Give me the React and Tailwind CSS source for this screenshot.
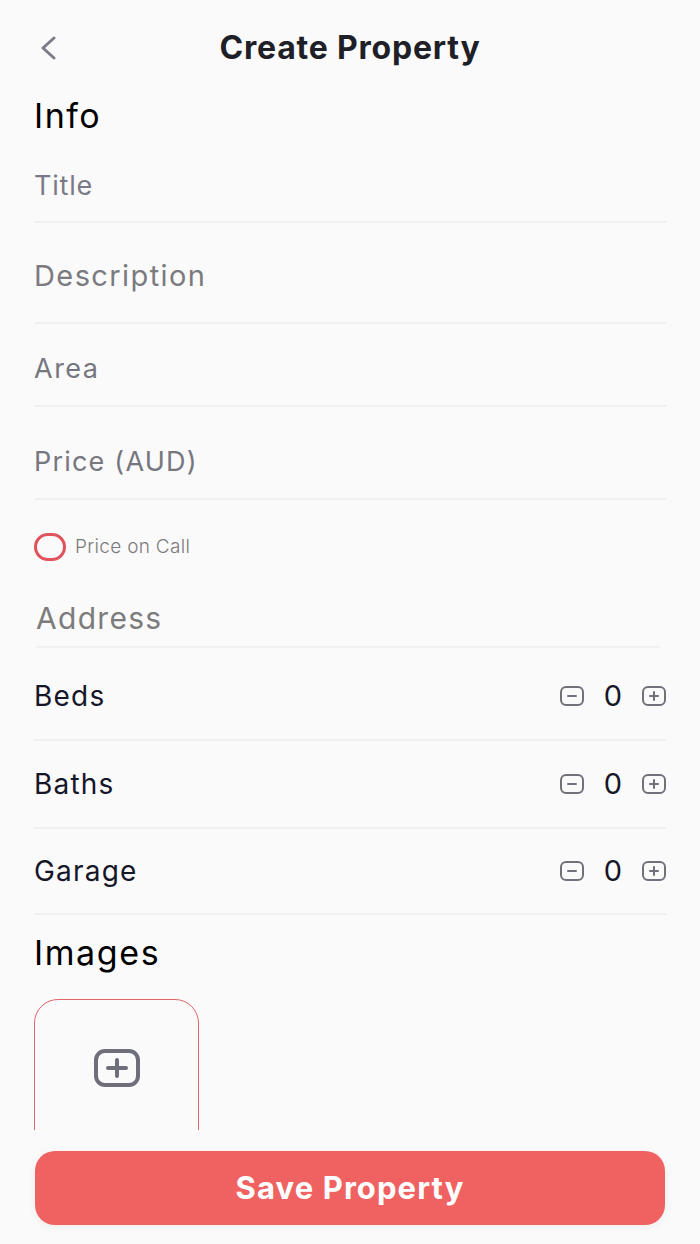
import React, { useState } from "react";

function Stepper({ value, onMinus, onPlus }) {
  return (
    <div className="flex items-center">
      <button onClick={onMinus} className="w-[24px] h-[20px] flex items-center justify-center">
        <svg width="24" height="20" viewBox="0 0 24 20" fill="none" stroke="#71717c" strokeWidth="2" strokeLinecap="round">
          <rect x="1" y="1" width="22" height="18" rx="5" />
          <path d="M8 10h8" />
        </svg>
      </button>
      <span className="w-[58px] text-center text-[29px] leading-[32px] text-[#161629]">{value}</span>
      <button onClick={onPlus} className="w-[24px] h-[20px] flex items-center justify-center">
        <svg width="24" height="20" viewBox="0 0 24 20" fill="none" stroke="#71717c" strokeWidth="2" strokeLinecap="round">
          <rect x="1" y="1" width="22" height="18" rx="5" />
          <path d="M8 10h8M12 6v8" />
        </svg>
      </button>
    </div>
  );
}

export default function App() {
  const [beds, setBeds] = useState(0);
  const [baths, setBaths] = useState(0);
  const [garage, setGarage] = useState(0);
  const [onCall, setOnCall] = useState(false);

  const counters = [
    { label: "Beds", value: beds, set: setBeds, cls: "pt-[32px] pb-[27px]" },
    { label: "Baths", value: baths, set: setBaths, cls: "pt-[27px] pb-[27px]" },
    { label: "Garage", value: garage, set: setGarage, cls: "pt-[26px] pb-[26px]" },
  ];

  return (
    <div className="h-[1244px] flex flex-col bg-[#fafafa] font-['Inter',sans-serif]">
      {/* header */}
      <div className="h-[96px] shrink-0 grid grid-cols-[1fr_auto_1fr] items-center px-[34px]">
        <button className="w-[30px] h-[30px] flex items-center">
          <svg width="24" height="24" viewBox="0 0 24 24" fill="none" stroke="#7b7b87" strokeWidth="3" strokeLinecap="round" strokeLinejoin="round">
            <path d="M20 2L9 12l11 10" />
          </svg>
        </button>
        <h1 className="text-[32px] font-bold text-[#1f1f28] tracking-[0.8px]">Create Property</h1>
        <div />
      </div>

      {/* scroll area */}
      <div className="flex-1 overflow-hidden px-[34px]">
        <h2 className="text-[34px] leading-[40px] text-black tracking-[1.5px]">Info</h2>

        <div className="pt-[34px] pb-[19px] border-b-2 border-[#f0f0f0]">
          <div className="text-[27px] leading-[32px] text-[#7a7a86] tracking-[0.8px]">Title</div>
        </div>
        <div className="pt-[37px] pb-[30px] border-b-2 border-[#f0f0f0]">
          <div className="text-[29px] leading-[32px] text-[#7a7a7f] tracking-[1.4px]">Description</div>
        </div>
        <div className="pt-[29px] pb-[20px] border-b-2 border-[#f0f0f0]">
          <div className="text-[27px] leading-[32px] text-[#76767f] tracking-[1.5px]">Area</div>
        </div>
        <div className="pt-[39px] pb-[20px] border-b-2 border-[#f0f0f0]">
          <div className="text-[27px] leading-[32px] text-[#76767f] tracking-[1.2px]">Price (AUD)</div>
        </div>

        <button onClick={() => setOnCall(!onCall)} className="mt-[33px] flex items-center gap-[9px]">
          <span className="w-[32px] h-[28px] rounded-full border-[3px] border-[#e0535b] flex items-center justify-center">
            {onCall && <span className="w-[14px] h-[12px] rounded-full bg-[#e0535b]" />}
          </span>
          <span className="text-[19px] font-light text-[#7a7a7a] tracking-[0.3px]">Price on Call</span>
        </button>

        <div className="ml-[2px] mr-[6px] pt-[40px] pb-[12px] border-b-2 border-[#f0f0f0]">
          <div className="text-[30px] leading-[32px] text-[#7c7c7c] tracking-[1.3px]">Address</div>
        </div>

        {counters.map((c) => (
          <div key={c.label} className={`${c.cls} flex items-center justify-between border-b-2 border-[#f0f0f0]`}>
            <span className="text-[28px] leading-[32px] text-[#161629] tracking-[1.2px]">{c.label}</span>
            <Stepper
              value={c.value}
              onMinus={() => c.set(Math.max(0, c.value - 1))}
              onPlus={() => c.set(c.value + 1)}
            />
          </div>
        ))}

        <h2 className="pt-[18px] text-[34px] leading-[40px] text-black tracking-[1.6px]">Images</h2>

        <button className="mt-[26px] w-[165px] h-[164px] rounded-[24px] border-[1.5px] border-[#e0646a] flex items-start justify-center pt-[49px]">
          <svg width="46" height="38" viewBox="0 0 46 38" fill="none" stroke="#6f6f7b" strokeWidth="4" strokeLinecap="round">
            <rect x="2" y="2" width="42" height="34" rx="9" />
            <path d="M14 19h18M23 11v16" />
          </svg>
        </button>
      </div>

      {/* footer */}
      <div className="shrink-0 px-[35px] pt-[21px] pb-[19px]">
        <button className="w-full h-[74px] rounded-[20px] bg-[#f06162] text-white text-[31px] font-bold tracking-[1.1px] shadow-[0_2px_10px_rgba(0,0,0,0.06)]">
          Save Property
        </button>
      </div>
    </div>
  );
}
